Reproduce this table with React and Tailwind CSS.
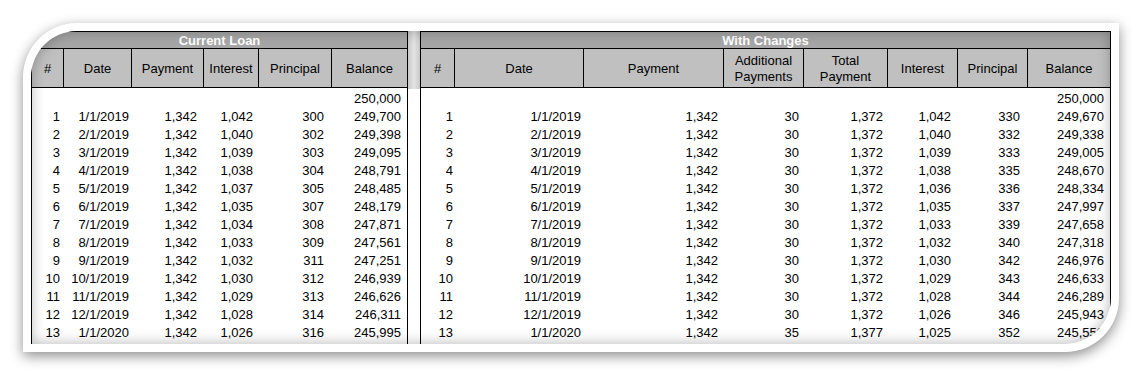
const LEFT_COLS = [
  { w: "w-[32px]", pr: "pr-[4px]" },
  { w: "w-[68px]", pr: "pr-[3px]" },
  { w: "w-[72px]", pr: "pr-[7px]" },
  { w: "w-[55px]", pr: "pr-[6px]" },
  { w: "w-[73px]", pr: "pr-[8px]" },
  { w: "w-[75px]", pr: "pr-[6px]" },
];

const RIGHT_COLS = [
  { w: "w-[34px]", pr: "pr-[2px]" },
  { w: "w-[129px]", pr: "pr-[3px]" },
  { w: "w-[140px]", pr: "pr-[6px]" },
  { w: "w-[80px]", pr: "pr-[5px]" },
  { w: "w-[84px]", pr: "pr-[5px]" },
  { w: "w-[70px]", pr: "pr-[7px]" },
  { w: "w-[70px]", pr: "pr-[8px]" },
  { w: "w-[82px]", pr: "pr-[6px]" },
];

const LEFT_HEAD = ["#", "Date", "Payment", "Interest", "Principal", "Balance"];
const RIGHT_HEAD = ["#", "Date", "Payment", "Additional Payments", "Total Payment", "Interest", "Principal", "Balance"];

const ACTUAL = [
  ["1", "1/1/2019", "1,342", "1,042", "300", "249,700"],
  ["2", "2/1/2019", "1,342", "1,040", "302", "249,398"],
  ["3", "3/1/2019", "1,342", "1,039", "303", "249,095"],
  ["4", "4/1/2019", "1,342", "1,038", "304", "248,791"],
  ["5", "5/1/2019", "1,342", "1,037", "305", "248,485"],
  ["6", "6/1/2019", "1,342", "1,035", "307", "248,179"],
  ["7", "7/1/2019", "1,342", "1,034", "308", "247,871"],
  ["8", "8/1/2019", "1,342", "1,033", "309", "247,561"],
  ["9", "9/1/2019", "1,342", "1,032", "311", "247,251"],
  ["10", "10/1/2019", "1,342", "1,030", "312", "246,939"],
  ["11", "11/1/2019", "1,342", "1,029", "313", "246,626"],
  ["12", "12/1/2019", "1,342", "1,028", "314", "246,311"],
  ["13", "1/1/2020", "1,342", "1,026", "316", "245,995"],
];

const CAMBIOS = [
  ["1", "1/1/2019", "1,342", "30", "1,372", "1,042", "330", "249,670"],
  ["2", "2/1/2019", "1,342", "30", "1,372", "1,040", "332", "249,338"],
  ["3", "3/1/2019", "1,342", "30", "1,372", "1,039", "333", "249,005"],
  ["4", "4/1/2019", "1,342", "30", "1,372", "1,038", "335", "248,670"],
  ["5", "5/1/2019", "1,342", "30", "1,372", "1,036", "336", "248,334"],
  ["6", "6/1/2019", "1,342", "30", "1,372", "1,035", "337", "247,997"],
  ["7", "7/1/2019", "1,342", "30", "1,372", "1,033", "339", "247,658"],
  ["8", "8/1/2019", "1,342", "30", "1,372", "1,032", "340", "247,318"],
  ["9", "9/1/2019", "1,342", "30", "1,372", "1,030", "342", "246,976"],
  ["10", "10/1/2019", "1,342", "30", "1,372", "1,029", "343", "246,633"],
  ["11", "11/1/2019", "1,342", "30", "1,372", "1,028", "344", "246,289"],
  ["12", "12/1/2019", "1,342", "30", "1,372", "1,026", "346", "245,943"],
  ["13", "1/1/2020", "1,342", "35", "1,377", "1,025", "352", "245,550"],
];

function Tabla({ titulo, cols, head, filas, ancho }) {
  const inicial = cols.map((_, i) => (i === cols.length - 1 ? "250,000" : ""));
  return (
    <div className={`${ancho} h-full flex flex-col border-x border-black`}>
      {/* titulo */}
      <div className="h-[18px] border-y border-black bg-[#a6a6a6] flex items-center justify-center text-white font-bold text-[13px] leading-none">
        {titulo}
      </div>
      {/* encabezados */}
      <div className="flex h-[39px] border-b border-black bg-[#c0c0c0]">
        {head.map((h, i) => (
          <div
            key={h}
            className={`${cols[i].w} flex items-center justify-center text-center text-[13px] leading-[16px] px-1 pt-[1px] ${
              i < head.length - 1 ? "border-r border-black" : ""
            }`}
          >
            {h}
          </div>
        ))}
      </div>
      {/* filas */}
      <div className="bg-white flex-1 pt-[2px]">
        {[inicial, ...filas].map((fila, r) => (
          <div key={r} className="flex h-[18px] text-[13px] leading-[18px]">
            {fila.map((v, i) => (
              <div key={i} className={`${cols[i].w} ${cols[i].pr} text-right whitespace-nowrap`}>
                {v}
              </div>
            ))}
          </div>
        ))}
      </div>
    </div>
  );
}

export default function App() {
  return (
    <div
      className="w-[1142px] h-[375px] bg-white pt-[23px] pl-[23px] text-black"
      style={{ fontFamily: '"Liberation Sans", Arial, sans-serif' }}
    >
      <div className="w-[1096px] h-[329px] bg-white p-[8px] rounded-tl-[54px] rounded-br-[54px] shadow-[0_4px_13px_rgba(0,0,0,0.45)]">
        <div className="relative w-[1080px] h-[313px] overflow-hidden rounded-tl-[46px] rounded-br-[46px] flex bg-white">
          <Tabla titulo="Current Loan" cols={LEFT_COLS} head={LEFT_HEAD} filas={ACTUAL} ancho="w-[377px]" />
          <div className="w-[12px] h-full flex flex-col">
            <div className="h-[58px] bg-gradient-to-r from-[#c8c8c8] via-[#e4e4e4] to-[#c8c8c8]" />
            <div className="flex-1 bg-white" />
          </div>
          <Tabla titulo="With Changes" cols={RIGHT_COLS} head={RIGHT_HEAD} filas={CAMBIOS} ancho="w-[691px]" />
          {/* efecto de borde suave */}
          <div className="absolute inset-0 pointer-events-none rounded-tl-[46px] rounded-br-[46px] shadow-[inset_0_0_14px_rgba(0,0,0,0.3)]" />
        </div>
      </div>
    </div>
  );
}
